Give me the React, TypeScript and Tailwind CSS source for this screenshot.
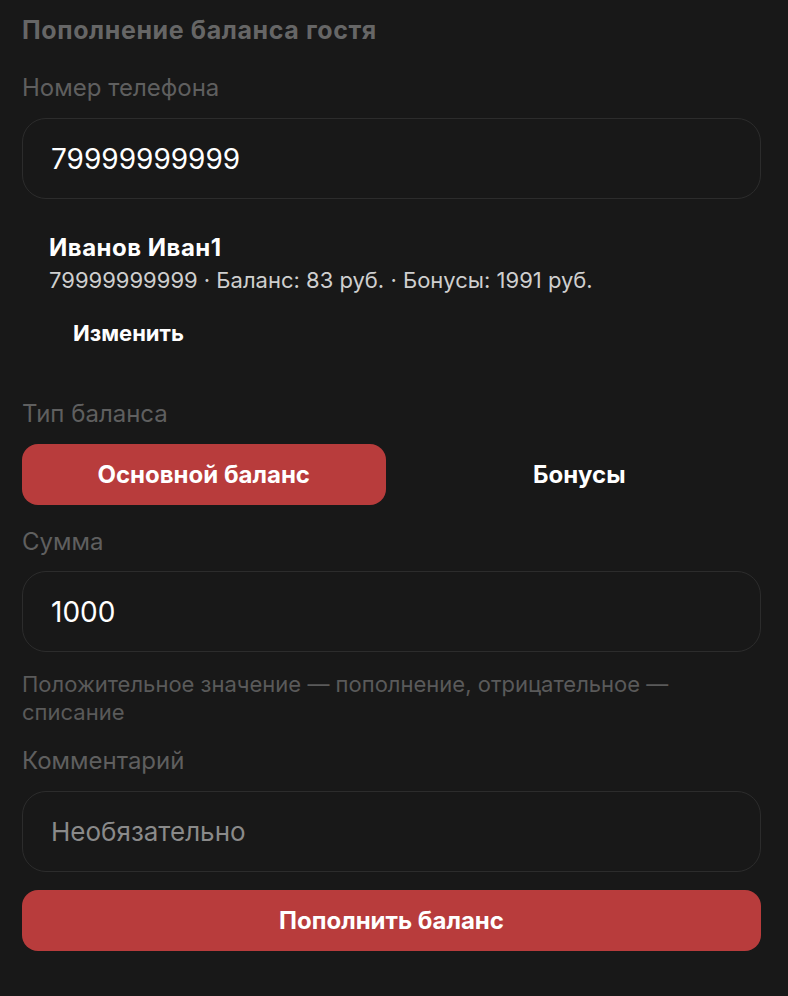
export default function App() {
  return (
    <div
      className="min-h-[996px] bg-[#181818] pl-[22px] pr-[27px] pt-[14px] pb-10"
      style={{ fontFamily: "Inter, 'Noto Sans', sans-serif" }}
    >
      <h1 className="text-[25px] font-bold leading-[32px] tracking-[0.6px] text-[#666666]">
        Пополнение баланса гостя
      </h1>

      <div className="mt-[26px] text-[24px] leading-[32px] text-[#5f5f5f]">Номер телефона</div>
      <div className="mt-[14px] flex h-[81px] items-center rounded-[24px] border-[1.5px] border-[#2c2c2c] px-[28px]">
        <span className="text-[28px] text-white">79999999999</span>
      </div>

      <div className="mt-[34px] pl-[27px]">
        <div className="text-[24px] font-bold leading-[30px] tracking-[0.5px] text-white">Иванов Иван1</div>
        <div className="mt-[3px] text-[22px] leading-[28px] text-[#cfcfcf]">
          79999999999 · Баланс: 83 руб. · Бонусы: 1991 руб.
        </div>
        <button className="mt-[24px] px-[24px] text-[22px] font-bold leading-[30px] text-white">
          Изменить
        </button>
      </div>

      <div className="mt-[50px] text-[24px] leading-[32px] text-[#5f5f5f]">Тип баланса</div>
      <div className="mt-[14px] grid grid-cols-2 gap-[12px]">
        <button className="h-[61px] rounded-[16px] bg-[#b83c3c] text-[24px] font-bold text-white">
          Основной баланс
        </button>
        <button className="h-[61px] rounded-[16px] text-[24px] font-bold text-white">Бонусы</button>
      </div>

      <div className="mt-[21px] text-[24px] leading-[32px] text-[#5f5f5f]">Сумма</div>
      <div className="mt-[13px] flex h-[81px] items-center rounded-[24px] border-[1.5px] border-[#2c2c2c] px-[28px]">
        <span className="text-[28px] text-white">1000</span>
      </div>
      <p className="mt-[18px] text-[22px] leading-[28px] text-[#5a5a5a]">
        Положительное значение — пополнение, отрицательное — списание
      </p>

      <div className="mt-[19px] text-[24px] leading-[32px] text-[#5f5f5f]">Комментарий</div>
      <div className="mt-[14px] flex h-[81px] items-center rounded-[24px] border-[1.5px] border-[#2c2c2c] px-[28px]">
        <span className="text-[26px] text-[#8a8a8a]">Необязательно</span>
      </div>

      <button className="mt-[18px] h-[61px] w-full rounded-[16px] bg-[#b83c3c] text-[24px] font-bold text-white">
        Пополнить баланс
      </button>
    </div>
  );
}
